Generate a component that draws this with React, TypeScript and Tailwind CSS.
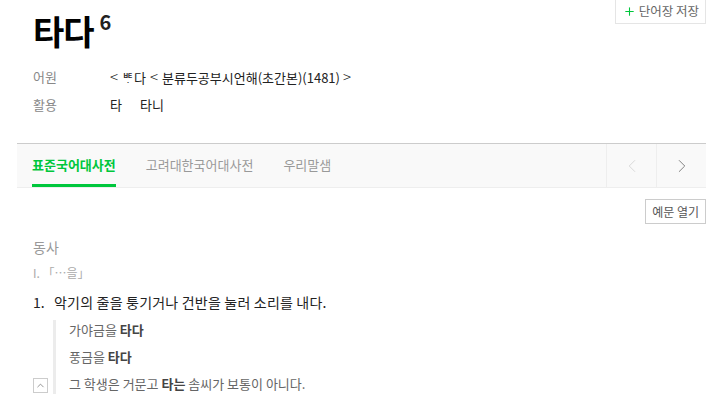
import { Plus, ChevronLeft, ChevronRight, ChevronUp } from "lucide-react";

const FONT = { fontFamily: '"Noto Sans CJK KR", "Noto Sans", sans-serif' };

const TABS = ["표준국어대사전", "고려대한국어대사전", "우리말샘"];

const EXAMPLES: [string, string, string][] = [
  ["가야금을 ", "타다", ""],
  ["풍금을 ", "타다", ""],
  ["그 학생은 거문고 ", "타는", " 솜씨가 보통이 아니다."],
];

export default function App() {
  return (
    <div className="w-[719px] h-[412px] bg-white overflow-hidden text-[#222]" style={FONT}>
      {/* header */}
      <div className="flex justify-between items-start pl-[33px] pr-[13px]">
        <div className="flex items-start pt-[11px]">
          <h1 className="text-[34px] font-bold leading-[40px] tracking-[-1px] text-black">타다</h1>
          <sup className="text-[20px] font-bold leading-none ml-[6px] mt-[1px] top-0">6</sup>
        </div>
        <button className="flex items-center gap-[3px] h-[25px] -mt-[1px] pl-[7px] pr-[6px] border border-[#e5e5e5] text-[12.5px] text-[#666]">
          <Plus size={13} strokeWidth={2} color="#00c73c" />
          단어장 저장
        </button>
      </div>

      <div className="pl-[33px] mt-[12px] text-[13px]">
        <div className="flex items-center h-[28px]">
          <span className="w-[77px] text-[#888]">어원</span>
          <span className="text-[#222]">
            <span className="mr-[4px] text-[15px] font-light">&lt;</span>ᄩᆞ다
            <span className="mx-[4px] text-[15px] font-light">&lt;</span>분류두공부시언해(초간본)(1481)
            <span className="ml-[3px] text-[15px] font-light">&gt;</span>
          </span>
        </div>
        <div className="flex items-center h-[28px]">
          <span className="w-[77px] text-[#888]">활용</span>
          <span className="w-[30px]">타</span>
          <span>타니</span>
        </div>
      </div>

      {/* dictionary tabs */}
      <div className="ml-[17px] mr-[13px] mt-[24px] flex h-[45px] bg-[#f9f9f9] border-t border-[#ccc] border-b border-b-[#eee]">
        <div className="flex flex-1 pl-[15px] gap-[30px]">
          {TABS.map((t, i) => (
            <div
              key={t}
              className={
                i === 0
                  ? "flex items-center text-[13px] font-bold text-[#00c73c] border-b-[3px] border-[#00c73c] pt-[1px]"
                  : "flex items-center text-[13px] text-[#999] pt-[1px] border-b-[3px] border-transparent"
              }
            >
              {t}
            </div>
          ))}
        </div>
        <div className="flex">
          <button className="w-[50px] flex items-center justify-center border-l border-[#eee] text-[#d5d5d5]">
            <ChevronLeft size={22} strokeWidth={1} />
          </button>
          <button className="w-[50px] flex items-center justify-center border-l border-[#eee] text-[#777]">
            <ChevronRight size={22} strokeWidth={1} />
          </button>
        </div>
      </div>

      <div className="flex justify-end pr-[13px] mt-[11px]">
        <button className="h-[25px] px-[6px] border border-[#ccc] text-[12px] text-[#555]">예문 열기</button>
      </div>

      {/* meaning */}
      <div className="pl-[33px] pr-[13px]">
        <div className="text-[14px] text-[#999] leading-[20px] mt-[13px]">동사</div>
        <div className="text-[12px] text-[#aaa] leading-[20px] mt-[6px]">I. 「…을」</div>
        <div className="flex text-[14px] leading-[20px] mt-[9px] text-[#222]">
          <span className="w-[21px]">1.</span>
          <span className="tracking-[0.2px]">악기의 줄을 퉁기거나 건반을 눌러 소리를 내다.</span>
        </div>
        <div className="flex mt-[8px]">
          <div className="w-[20px] flex items-end">
            <button className="w-[15px] h-[15px] mb-[1px] border border-[#ccc] flex items-center justify-center text-[#666]">
              <ChevronUp size={11} strokeWidth={1.5} />
            </button>
          </div>
          <div className="border-l-[3px] border-[#ececec] pl-[13px] flex flex-col gap-[7px] text-[13px] leading-[20px] text-[#666]">
            {EXAMPLES.map(([a, b, c]) => (
              <div key={a}>
                {a}
                <b className="text-[#444]">{b}</b>
                {c}
              </div>
            ))}
          </div>
        </div>
      </div>
    </div>
  );
}
